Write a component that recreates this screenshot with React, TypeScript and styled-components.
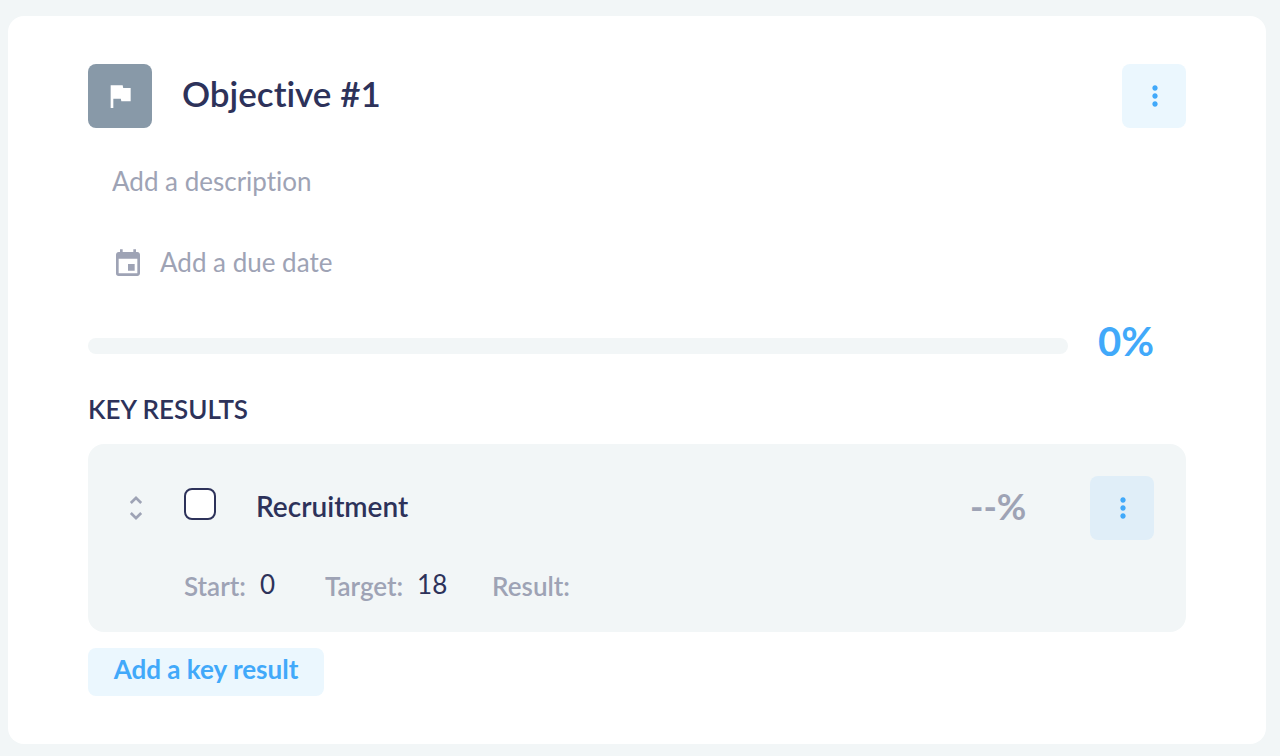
import { useState } from "react";
import styled, { createGlobalStyle } from "styled-components";
import { MdEvent, MdFlag, MdMoreVert, MdUnfoldMore } from "react-icons/md";

const colors = {
  page: "#f2f6f7",
  card: "#ffffff",
  ink: "#2d325a",
  muted: "#9ea3b5",
  accent: "#41a9fa",
  accentSoft: "#ebf7fe",
  accentTint: "#e0eef8",
  slate: "#8899a8",
};

const GlobalStyle = createGlobalStyle`
  *, *::before, *::after { box-sizing: border-box; }
  body {
    margin: 0;
    padding: 16px 14px 12px 8px;
    background: ${colors.page};
    color: ${colors.ink};
    font-family: Lato, "Open Sans", sans-serif;
    font-size: 26px;
    font-variant-ligatures: none;
    line-height: 32px;
  }
  button, input { font: inherit; font-variant-ligatures: none; color: inherit; }
`;

const Card = styled.main`
  display: flex;
  flex-direction: column;
  padding: 48px 80px;
  border-radius: 16px;
  background: ${colors.card};
`;

const Header = styled.header`
  display: flex;
  align-items: center;
`;

const FlagTile = styled.span`
  display: flex;
  align-items: center;
  justify-content: center;
  width: 64px;
  height: 64px;
  border-radius: 8px;
  background: ${colors.slate};
  color: ${colors.card};
`;

const Title = styled.h1`
  flex: 1;
  margin: 0;
  padding: 0 30px 6px;
  font-size: 35px;
  font-weight: 600;
  line-height: 44px;
`;

const MenuButton = styled.button<{ $tinted?: boolean }>`
  display: flex;
  align-items: center;
  justify-content: center;
  width: 64px;
  height: 64px;
  padding: 0 0 0 2px;
  border: 0;
  border-radius: 8px;
  background: ${({ $tinted }) => ($tinted ? colors.accentTint : colors.accentSoft)};
  color: ${colors.accent};
  cursor: pointer;
`;

const Details = styled.div`
  display: flex;
  flex-direction: column;
  gap: 50px;
  padding: 38px 24px 0;
`;

const DescriptionInput = styled.input`
  width: 100%;
  height: 32px;
  padding: 0 0 2px;
  border: 0;
  background: none;
  &::placeholder { color: ${colors.muted}; opacity: 1; }
`;

const DueDateButton = styled.button`
  display: flex;
  align-items: center;
  align-self: flex-start;
  gap: 16px;
  height: 32px;
  padding: 0;
  border: 0;
  background: none;
  color: ${colors.muted};
  cursor: pointer;
`;

const DueDateText = styled.span`
  padding-bottom: 4px;
`;

const ProgressRow = styled.div`
  display: flex;
  align-items: center;
  gap: 30px;
  padding-top: 40px;
`;

const Track = styled.div`
  flex: 1;
  height: 16px;
  border-radius: 8px;
  background: ${colors.page};
`;

const Percent = styled.output<{ $muted?: boolean }>`
  width: 88px;
  padding-bottom: ${({ $muted }) => ($muted ? 4 : 10)}px;
  color: ${({ $muted }) => ($muted ? colors.muted : colors.accent)};
  font-size: ${({ $muted }) => ($muted ? 36 : 40)}px;
  font-weight: 700;
  line-height: 42px;
`;

const SectionTitle = styled.h2`
  margin: 0;
  padding: 21px 0 19px;
  font-size: 26px;
  font-weight: 600;
  line-height: 32px;
`;

const KeyResult = styled.section`
  padding: 32px 32px 30px;
  border-radius: 16px;
  background: ${colors.page};
`;

const KeyResultRow = styled.div`
  display: flex;
  align-items: center;
`;

const SortHandle = styled.button`
  display: flex;
  padding: 0;
  border: 0;
  background: none;
  color: ${colors.muted};
  cursor: grab;
`;

const Checkbox = styled.input`
  appearance: none;
  width: 32px;
  height: 32px;
  margin: 0 40px 8px 32px;
  border: 2px solid ${colors.ink};
  border-radius: 8px;
  background: ${colors.card};
  &:checked { background: ${colors.accent}; }
`;

const KeyResultName = styled.label`
  flex: 1;
  padding-bottom: 4px;
  font-size: 28px;
  font-weight: 600;
`;

const RowActions = styled.div`
  display: flex;
  align-items: center;
  gap: 32px;
`;

const Metrics = styled.div`
  display: flex;
  gap: 40px;
  padding: 30px 0 0 64px;
`;

const Metric = styled.label`
  display: flex;
  gap: 14px;
  color: ${colors.muted};
  font-weight: 600;
`;

const MetricInput = styled.input<{ $chars: number }>`
  width: ${({ $chars }) => $chars * 10 + 15}px;
  height: 32px;
  padding: 0 0 4px;
  border: 0;
  background: none;
  color: ${colors.ink};
  font-weight: 400;
`;

const AddButton = styled.button`
  align-self: flex-start;
  min-width: 236px;
  height: 48px;
  margin-top: 16px;
  padding: 0 24px 6px;
  border: 0;
  border-radius: 8px;
  background: ${colors.accentSoft};
  color: ${colors.accent};
  font-weight: 700;
  cursor: pointer;
`;

const metrics = [
  { label: "Start:", value: "0" },
  { label: "Target:", value: "18" },
  { label: "Result:", value: "" },
];

export default function App() {
  const [done, setDone] = useState(false);

  return (
    <>
      <GlobalStyle />
      <Card>
        <Header>
          <FlagTile><MdFlag size={32} /></FlagTile>
          <Title>Objective #1</Title>
          <MenuButton type="button" aria-label="Objective menu"><MdMoreVert size={32} /></MenuButton>
        </Header>
        <Details>
          <DescriptionInput aria-label="Description" placeholder="Add a description" />
          <DueDateButton type="button">
            <MdEvent size={32} />
            <DueDateText>Add a due date</DueDateText>
          </DueDateButton>
        </Details>
        <ProgressRow>
          <Track role="progressbar" aria-label="Objective progress" aria-valuenow={0} aria-valuemin={0} aria-valuemax={100} />
          <Percent>0%</Percent>
        </ProgressRow>
        <SectionTitle>KEY RESULTS</SectionTitle>
        <KeyResult>
          <KeyResultRow>
            <SortHandle type="button" aria-label="Reorder"><MdUnfoldMore size={32} /></SortHandle>
            <Checkbox id="recruitment" type="checkbox" checked={done} onChange={(e) => setDone(e.target.checked)} />
            <KeyResultName htmlFor="recruitment">Recruitment</KeyResultName>
            <RowActions>
              <Percent $muted>--%</Percent>
              <MenuButton $tinted type="button" aria-label="Key result menu"><MdMoreVert size={32} /></MenuButton>
            </RowActions>
          </KeyResultRow>
          <Metrics>
            {metrics.map(({ label, value }) => (
              <Metric key={label}>
                {label}
                <MetricInput $chars={value.length} defaultValue={value} inputMode="numeric" />
              </Metric>
            ))}
          </Metrics>
        </KeyResult>
        <AddButton type="button">Add a key result</AddButton>
      </Card>
    </>
  );
}
